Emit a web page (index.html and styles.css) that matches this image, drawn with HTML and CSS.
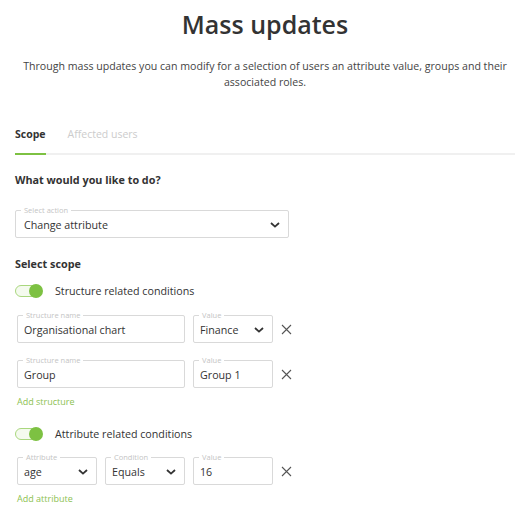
FILE: index.html
```html
<!DOCTYPE html>
<html lang="en">
<head>
  <meta charset="UTF-8">
  <meta name="viewport" content="width=device-width, initial-scale=1.0">
  <title>Mass updates</title>
  <link rel="stylesheet" href="styles.css">
</head>
<body>
  <div class="pagina">
    <h1 class="titulo">Mass updates</h1>
    <p class="descripcion">Through mass updates you can modify for a selection of users an attribute value, groups and their associated roles.</p>

    <div class="tabs">
      <div class="tab tab-activa">Scope</div>
      <div class="tab">Affected users</div>
    </div>

    <h3 class="subtitulo">What would you like to do?</h3>
    <div class="campo campo-accion">
      <span class="etiqueta">Select action</span>
      <span class="valor">Change attribute</span>
      <svg class="chevron" width="10" height="6" viewBox="0 0 10 6"><path d="M1 1l4 3.6L9 1" fill="none" stroke="#333" stroke-width="1.8"/></svg>
    </div>

    <h3 class="subtitulo subtitulo-scope">Select scope</h3>
    <div class="interruptor">
      <span class="pista"><span class="perilla"></span></span>
      <span>Structure related conditions</span>
    </div>

    <div class="fila fila-primera">
      <div class="campo ancho-nombre">
        <span class="etiqueta">Structure name</span>
        <span class="valor">Organisational chart</span>
      </div>
      <div class="campo ancho-valor">
        <span class="etiqueta">Value</span>
        <span class="valor">Finance</span>
        <svg class="chevron" width="10" height="6" viewBox="0 0 10 6"><path d="M1 1l4 3.6L9 1" fill="none" stroke="#333" stroke-width="1.8"/></svg>
      </div>
      <svg class="quitar" width="11" height="11" viewBox="0 0 11 11"><path d="M1 1l9 9M10 1l-9 9" stroke="#555" stroke-width="1.1"/></svg>
    </div>
    <div class="fila">
      <div class="campo ancho-nombre">
        <span class="etiqueta">Structure name</span>
        <span class="valor">Group</span>
      </div>
      <div class="campo ancho-valor">
        <span class="etiqueta">Value</span>
        <span class="valor">Group 1</span>
      </div>
      <svg class="quitar" width="11" height="11" viewBox="0 0 11 11"><path d="M1 1l9 9M10 1l-9 9" stroke="#555" stroke-width="1.1"/></svg>
    </div>
    <a class="agregar">Add structure</a>

    <div class="interruptor interruptor-atributo">
      <span class="pista"><span class="perilla"></span></span>
      <span>Attribute related conditions</span>
    </div>

    <div class="fila fila-atributo">
      <div class="campo ancho-corto">
        <span class="etiqueta">Attribute</span>
        <span class="valor">age</span>
        <svg class="chevron" width="10" height="6" viewBox="0 0 10 6"><path d="M1 1l4 3.6L9 1" fill="none" stroke="#333" stroke-width="1.8"/></svg>
      </div>
      <div class="campo ancho-corto">
        <span class="etiqueta">Condition</span>
        <span class="valor">Equals</span>
        <svg class="chevron" width="10" height="6" viewBox="0 0 10 6"><path d="M1 1l4 3.6L9 1" fill="none" stroke="#333" stroke-width="1.8"/></svg>
      </div>
      <div class="campo ancho-valor">
        <span class="etiqueta">Value</span>
        <span class="valor">16</span>
      </div>
      <svg class="quitar" width="11" height="11" viewBox="0 0 11 11"><path d="M1 1l9 9M10 1l-9 9" stroke="#555" stroke-width="1.1"/></svg>
    </div>
    <a class="agregar">Add attribute</a>
  </div>
</body>
</html>
```

FILE: styles.css
```css
body {
  margin: 0;
  font-family: "Open Sans", sans-serif;
  color: #333;
  background-color: #fff;
}

.pagina {
  padding: 0 10px 0 15px;
}

.titulo {
  margin: 0;
  padding-top: 4px;
  font-size: 25px;
  font-weight: 600;
  text-align: center;
  line-height: 40px;
}

.descripcion {
  margin: 14px 0 0;
  font-size: 10.6px;
  line-height: 16px;
  text-align: center;
  color: #444;
}

.tabs {
  display: flex;
  margin-top: 36px;
  border-bottom: 2px solid #f0f0f0;
}

.tab {
  font-size: 10.5px;
  line-height: 16px;
  padding-bottom: 11px;
  margin-right: 22px;
  color: #ccc;
}

.tab-activa {
  font-weight: 700;
  color: #333;
  border-bottom: 2px solid #7dc142;
  margin-bottom: -2px;
}

.subtitulo {
  margin: 17px 0 0;
  font-size: 10.8px;
  font-weight: 700;
  line-height: 16px;
}

.campo {
  position: relative;
  box-sizing: border-box;
  height: 28px;
  border: 1px solid #d9d9d9;
  border-radius: 2px;
  display: flex;
  align-items: center;
  padding: 2px 8px 0 6px;
}

.campo-accion {
  width: 274px;
  margin-top: 22px;
  padding-left: 8px;
}

.etiqueta {
  position: absolute;
  top: -6px;
  left: 5px;
  padding: 0 3px;
  background: #fff;
  font-size: 7.5px;
  line-height: 10px;
  color: #c4c4c4;
}

.valor {
  flex: 1;
  font-size: 10.7px;
}

.chevron {
  display: block;
}

.subtitulo-scope {
  margin-top: 18px;
}

.interruptor {
  display: flex;
  align-items: center;
  margin-top: 11px;
  font-size: 10.7px;
  line-height: 16px;
}

.interruptor-atributo {
  margin-top: 17px;
}

.pista {
  position: relative;
  box-sizing: border-box;
  width: 27px;
  height: 12px;
  border: 1px solid #a9d77e;
  border-radius: 6px;
  background: #f4faee;
  margin-right: 13px;
}

.perilla {
  position: absolute;
  right: -2px;
  top: -2px;
  width: 14px;
  height: 14px;
  border-radius: 50%;
  background: #7dc142;
}

.fila {
  display: flex;
  align-items: center;
  gap: 8px;
  margin-top: 17px;
  padding-left: 2px;
}

.fila-primera {
  margin-top: 16px;
}

.fila-atributo {
  margin-top: 15px;
}

.ancho-nombre {
  width: 168px;
}

.ancho-valor {
  width: 80px;
}

.ancho-corto {
  width: 80px;
}

.quitar {
  display: block;
}

.agregar {
  display: block;
  margin-top: 7px;
  padding-left: 2px;
  font-size: 9px;
  line-height: 14px;
  color: #8cc152;
}
```
